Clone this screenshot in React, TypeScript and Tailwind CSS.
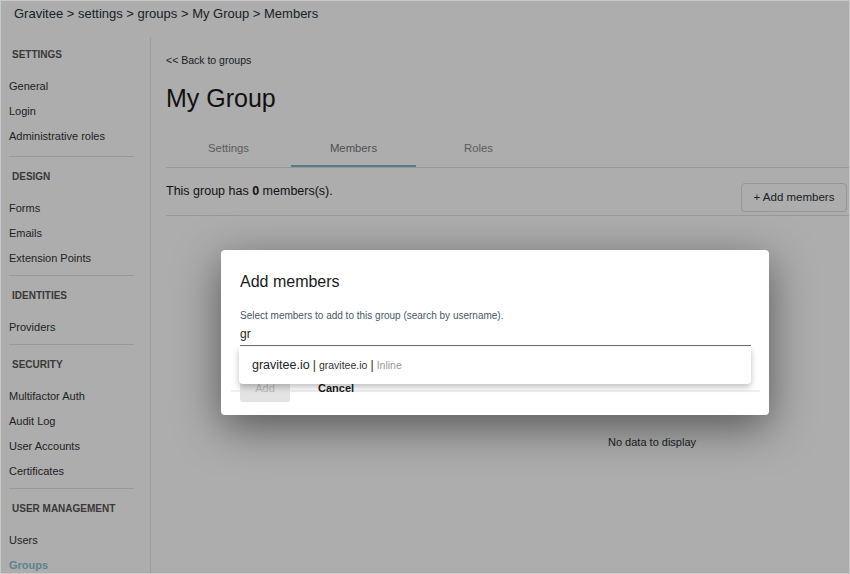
import React from 'react';

const sections = [
  { title: 'Settings', items: ['General', 'Login', 'Administrative roles'] },
  { title: 'Design', items: ['Forms', 'Emails', 'Extension Points'] },
  { title: 'Identities', items: ['Providers'] },
  { title: 'Security', items: ['Multifactor Auth', 'Audit Log', 'User Accounts', 'Certificates'] },
  { title: 'User management', items: ['Users', 'Groups'] },
];

const tabs = ['Settings', 'Members', 'Roles'];

function Sidebar() {
  return (
    <aside className="w-[150px] shrink-0 border-r border-[#e6e6e6] pt-[10px]">
      {sections.map((s, i) => (
        <div key={s.title}>
          <div
            className={`${i === 0 ? '' : 'mt-[12px]'} mb-[11px] h-[16px] pl-[11px] text-[10px] font-bold uppercase leading-[16px] text-[#555]`}
          >
            {s.title}
          </div>
          {s.items.map((item) => (
            <div
              key={item}
              className={`flex h-[25px] items-center pl-[8px] text-[11px] ${
                item === 'Groups' ? 'font-bold text-[#86c3d0]' : 'text-[#333]'
              }`}
            >
              {item}
            </div>
          ))}
          {i < sections.length - 1 && (
            <div className={`${i === 0 ? 'mt-[7px]' : 'mt-[4px]'} ml-[8px] mr-[16px] h-px bg-[#e0e0e0]`} />
          )}
        </div>
      ))}
    </aside>
  );
}

function AddMembersDialog() {
  return (
    <div className="absolute left-[220px] top-[249px] w-[548px] rounded-[4px] bg-white pl-[19px] pr-[18px] pt-[22px] pb-[13px] shadow-[0_12px_44px_rgba(0,0,0,0.5)]">
      <h2 className="h-[20px] text-[16px] font-medium leading-[20px] text-[#1a1a1a]">Add members</h2>
      <p className="mt-[17px] h-[13px] text-[10px] leading-[13px] text-[#455a64]">
        Select members to add to this group (search by username).
      </p>
      <div className="relative mt-[4px]">
        <div className="border-b border-[#5f7479] pb-[3px] text-[12px] leading-[16px] text-[#222]">gr</div>
        <div className="absolute left-[-1px] right-0 top-full z-10 mt-px flex h-[37px] items-center rounded-b-[4px] bg-white pl-[13px] shadow-[0_3px_6px_rgba(0,0,0,0.25)]">
          <span className="text-[12.5px] text-[#222]">gravitee.io</span>
          <span className="mx-[3px] text-[12.5px] text-[#333]">|</span>
          <span className="text-[10.5px] text-[#333]">gravitee.io</span>
          <span className="mx-[3px] text-[12.5px] text-[#333]">|</span>
          <span className="text-[10.5px] text-[#9a9a9a]">Inline</span>
        </div>
      </div>
      <div className="-mx-[9px] mt-[28px] flex items-center bg-[linear-gradient(to_bottom,transparent_16px,#efefef_16px,#efefef_18px,transparent_18px)] px-[9px]">
        <button className="h-[28px] w-[50px] rounded-[3px] bg-[#e3e3e3] text-[11px] text-[#b8b8b8]">Add</button>
        <button className="ml-[28px] text-[11px] font-bold text-[#1a1a1a]">Cancel</button>
      </div>
    </div>
  );
}

export default function App() {
  return (
    <div
      className="relative h-[574px] w-[850px] overflow-hidden border border-[#c9c9c9] bg-white"
      style={{ fontFamily: '"Liberation Sans", Arial, sans-serif' }}
    >
      <div className="flex h-[36px] items-start pl-[13px] pt-[5px] text-[13px] leading-[16px] text-[#263238]">
        Gravitee &gt; settings &gt; groups &gt; My Group &gt; Members
      </div>
      <div className="flex h-[536px]">
        <Sidebar />
        <main className="flex-1 pl-[15px]">
          <div className="pt-[16px] text-[10.5px] leading-[14px] text-[#263238]">&lt;&lt; Back to groups</div>
          <h1 className="mt-[16px] h-[30px] text-[25px] leading-[30px] text-[#1a1a1a]">My Group</h1>
          <div className="mt-[18px] flex border-b border-[#e0e0e0]">
            {tabs.map((t) => (
              <div
                key={t}
                className={`flex h-[36px] w-[125px] items-center justify-center border-b-2 text-[11.3px] font-medium ${
                  t === 'Members' ? 'border-[#7fb8c6] text-[#777]' : 'border-transparent text-[#888]'
                }`}
              >
                {t}
              </div>
            ))}
          </div>
          <div className="flex items-start justify-between border-b border-[#e0e0e0] pb-[3px] pr-[2px] pt-[15px]">
            <p className="text-[12.5px] leading-[17px] text-[#1a1a1a]">
              This group has <b>0</b> members(s).
            </p>
            <button className="h-[29px] w-[106px] rounded-[4px] border border-[#dddddd] text-[11.5px] font-medium text-[#263238]">
              + Add members
            </button>
          </div>
          <div className="pl-[442px] pt-[219px] text-[11px] leading-[14px] text-[#263238]">No data to display</div>
        </main>
      </div>
      <div className="absolute inset-0 bg-black/[0.32]" />
      <AddMembersDialog />
    </div>
  );
}
